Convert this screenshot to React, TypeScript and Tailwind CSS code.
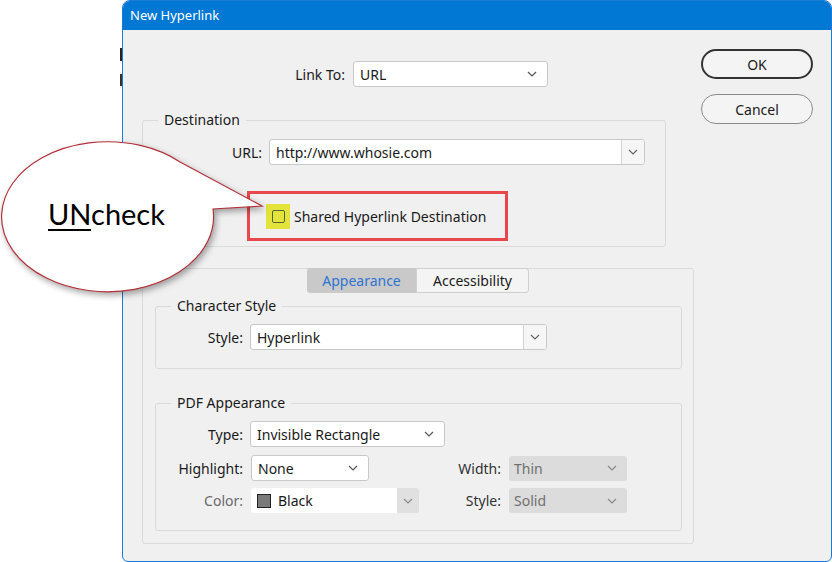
import React from 'react';

const Chevron = ({ color = '#555' }: { color?: string }) => (
  <svg width="10" height="6" viewBox="0 0 10 6" fill="none">
    <path d="M1 1 L5 5 L9 1" stroke={color} strokeWidth="1.2" />
  </svg>
);

function Select({ value, className = '' }: { value: string; className?: string }) {
  return (
    <div className={`flex h-[26px] items-center justify-between rounded-[3px] border border-[#c9c9c9] bg-white pl-[6px] pr-[10px] ${className}`}>
      <span>{value}</span>
      <Chevron />
    </div>
  );
}

function Combo({ value, className = '' }: { value: string; className?: string }) {
  return (
    <div className={`flex h-[26px] items-stretch overflow-hidden rounded-[3px] border border-[#c9c9c9] bg-white ${className}`}>
      <span className="flex flex-1 items-center pl-[6px]">{value}</span>
      <span className="flex w-[23px] items-center justify-center border-l border-[#d4d4d4] bg-[#f6f6f6]">
        <Chevron color="#666" />
      </span>
    </div>
  );
}

function Disabled({ value, className = '' }: { value: string; className?: string }) {
  return (
    <div className={`flex h-[25px] items-center justify-between rounded-[3px] bg-[#dcdcdc] pl-[5px] pr-[10px] text-[#707070] ${className}`}>
      <span>{value}</span>
      <Chevron color="#8a8a8a" />
    </div>
  );
}

function Group({ title, className = '', children }: { title: string; className?: string; children: React.ReactNode }) {
  return (
    <div className={`relative rounded-[3px] border border-[#dadada] ${className}`}>
      <span className="absolute -top-[11px] left-[15px] bg-[#f0f0f0] px-[6px] leading-[20px] text-[#1a1a1a]">{title}</span>
      {children}
    </div>
  );
}

export default function App() {
  return (
    <div className="relative h-[562px] w-[832px] overflow-hidden bg-white font-['Noto_Sans',sans-serif] text-[14px] text-[#1a1a1a]">
      {/* window behind */}
      <div className="absolute left-[120px] top-[48px] h-[13px] w-[2px] bg-[#222]" />
      <div className="absolute left-[120px] top-[74px] h-[12px] w-[2px] bg-[#333]" />

      {/* dialog */}
      <div className="absolute left-[122px] top-0 flex h-[562px] w-[710px] flex-col overflow-hidden rounded-t-[8px] rounded-b-[6px] border border-[#1a7ad6] bg-[#f0f0f0]">
        <div className="flex h-[29px] items-center bg-[#0078d4] pl-[7px] text-[13px] text-white">New Hyperlink</div>

        <div className="flex pl-[19px]">
          {/* main column */}
          <div className="w-[552px] pt-[31px]">
            <div className="flex items-center">
              <span className="w-[211px] pr-[8px] text-right">Link To:</span>
              <Select value="URL" className="w-[195px]" />
            </div>

            <Group title="Destination" className="mt-[33px] h-[127px] w-[524px] pt-[18px]">
              <div className="flex items-center">
                <span className="w-[126px] pr-[7px] text-right">URL:</span>
                <Combo value="http://www.whosie.com" className="h-[25px] w-[376px]" />
              </div>
              <div className="ml-[104px] mt-[26px] flex h-[50px] w-[261px] items-center border-[3px] border-[#e8474c]">
                <span className="ml-[16px] flex h-[25px] w-[24px] items-center justify-center bg-[#e4e33c]">
                  <span className="h-[13px] w-[13px] rounded-[2px] border-[1.5px] border-[#4e6530]" />
                </span>
                <span className="ml-[4px]">Shared Hyperlink Destination</span>
              </div>
            </Group>

            {/* tab panel */}
            <div className="mt-[21px] h-[276px] w-[552px] rounded-[3px] border border-[#dadada]">
              <div className="-mt-[1px] ml-[164px] flex h-[25px]">
                <span className="flex w-[109px] items-center justify-center rounded-l-[3px] bg-[#c9c9c9] text-[#2f74d0]">Appearance</span>
                <span className="flex w-[113px] items-center justify-center rounded-r-[3px] border border-[#cfcfcf] bg-[#f4f4f4]">Accessibility</span>
              </div>

              <Group title="Character Style" className="ml-[12px] mt-[13px] h-[63px] w-[527px] pt-[17px]">
                <div className="flex items-center">
                  <span className="w-[94px] pr-[7px] text-right">Style:</span>
                  <Combo value="Hyperlink" className="w-[297px]" />
                </div>
              </Group>

              <Group title="PDF Appearance" className="ml-[12px] mt-[34px] h-[128px] w-[527px] pt-[17px]">
                <div className="flex items-center">
                  <span className="w-[94px] pr-[7px] text-right">Type:</span>
                  <Select value="Invisible Rectangle" className="h-[25px] w-[195px]" />
                </div>
                <div className="mt-[8px] flex items-center">
                  <span className="w-[95px] pr-[8px] text-right">Highlight:</span>
                  <Select value="None" className="h-[25px] w-[118px]" />
                  <span className="w-[140px] pr-[8px] text-right text-[#333]">Width:</span>
                  <Disabled value="Thin" className="w-[118px]" />
                </div>
                <div className="mt-[7px] flex items-center">
                  <span className="w-[95px] pr-[8px] text-right text-[#6a6a6a]">Color:</span>
                  <div className="flex h-[25px] w-[168px] items-stretch overflow-hidden rounded-[3px]">
                    <span className="flex flex-1 items-center bg-white pl-[6px]">
                      <span className="mr-[7px] h-[14px] w-[14px] border border-[#222] bg-[#7a7a7a]" />
                      Black
                    </span>
                    <span className="flex w-[22px] items-center justify-center bg-[#e0e0e0]">
                      <Chevron color="#8a8a8a" />
                    </span>
                  </div>
                  <span className="w-[90px] pr-[8px] text-right text-[#333]">Style:</span>
                  <Disabled value="Solid" className="w-[118px]" />
                </div>
              </Group>
            </div>
          </div>

          {/* buttons */}
          <div className="ml-[7px] flex w-[112px] flex-col pt-[19px]">
            <button className="h-[30px] rounded-full border-2 border-[#333] bg-[#f4f4f4]">OK</button>
            <button className="mt-[15px] h-[30px] rounded-full border border-[#8a8a8a] bg-[#f4f4f4]">Cancel</button>
          </div>
        </div>
      </div>

      {/* callout */}
      <svg className="absolute left-0 top-0 drop-shadow-[2px_3px_3px_rgba(0,0,0,0.35)]" width="300" height="300" viewBox="0 0 300 300">
        <path d="M180 162 L262 206 L213 209 A106 75 0 1 1 180 162 Z" fill="#fff" stroke="#b3323a" strokeWidth="1.2" />
      </svg>
      <div className="absolute left-[48px] top-[199px] font-['Lato',sans-serif] text-[29px] leading-none text-black">
        <span className="underline decoration-[1.5px] underline-offset-[4px]">UN</span>check
      </div>
    </div>
  );
}
